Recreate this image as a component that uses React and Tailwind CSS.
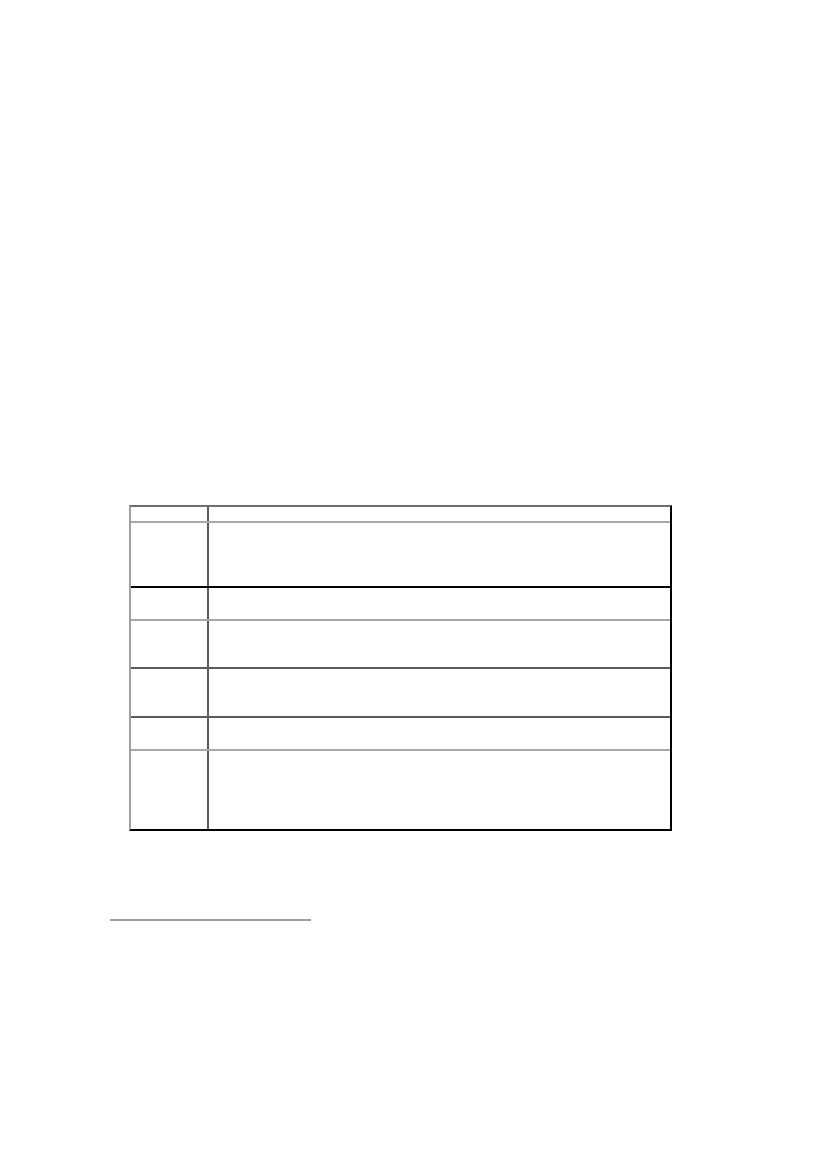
import React from 'react'

// blank page with an empty bordered table and a footnote rule
const rows = [
  { h: 'h-[16px]', line: 'border-[#a8a8a8]' },
  { h: 'h-[65px]', line: 'border-black' },
  { h: 'h-[33px]', line: 'border-[#a8a8a8]' },
  { h: 'h-[48px]', line: 'border-[#5a5a5a]' },
  { h: 'h-[49px]', line: 'border-[#5a5a5a]' },
  { h: 'h-[33px]', line: 'border-[#a8a8a8]' },
  { h: 'h-[78px]', line: 'border-transparent' },
]

const App = () => {
  return (
    <div className="w-[827px] h-[1169px] bg-white font-['Liberation_Sans',sans-serif] text-black">
      <div className="pt-[505px] pl-[129px]">
        <div className="w-[543px] border-t-2 border-l-2 border-r-2 border-b-2 border-t-[#6e6e6e] border-l-[#a0a0a0] border-r-black border-b-black flex flex-col">
          {rows.map((r, i) => (
            <div key={i} className={`flex ${r.h} ${i < rows.length - 1 ? 'border-b-2' : ''} ${r.line}`}>
              <div className="w-[78px] border-r-2 border-[#5a5a5a]"></div>
              <div className="flex-1"></div>
            </div>
          ))}
        </div>
      </div>
      <div className="mt-[88px] ml-[110px] w-[201px] h-[2px] bg-[#a0a0a0]"></div>
    </div>
  )
}

export default App
